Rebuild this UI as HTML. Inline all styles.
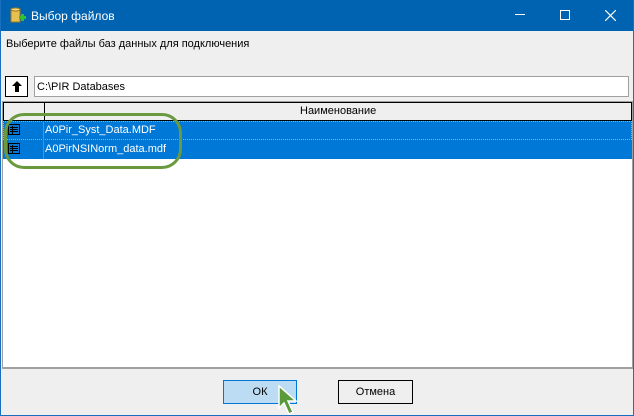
<!DOCTYPE html>
<html><head><meta charset="utf-8"><style>
*{margin:0;padding:0;box-sizing:border-box}
body{width:634px;height:416px;overflow:hidden;background:#1a6fbf;font-family:"Liberation Sans",sans-serif;font-size:12px;color:#000;position:relative}
.win{position:absolute;left:1px;top:0;width:632px;height:415px;background:#efefef}
.title{position:absolute;left:0;top:0;width:632px;height:31px;background:#0063b1;color:#fff;font-size:12px}
.abs{position:absolute}
</style></head><body>
<div class="win">
<div class="title">
 <svg class="abs" style="left:8px;top:7px" width="18" height="18"><rect x="2" y="2" width="9" height="13" fill="#e8c050" stroke="#a07820"/><ellipse cx="6.5" cy="2.5" rx="4.5" ry="1.5" fill="#f5dc80" stroke="#a07820"/><rect x="10" y="9" width="7" height="3" fill="#30c030"/><rect x="12" y="7" width="3" height="7" fill="#30c030"/></svg>
 <div class="abs" style="left:30px;top:9px">Выбор файлов</div>
 <div class="abs" style="left:514px;top:14px;width:10px;height:1px;background:#fff"></div>
 <div class="abs" style="left:559px;top:10px;width:10px;height:10px;border:1px solid #fff"></div>
 <svg class="abs" style="left:604px;top:10px" width="11" height="11"><path d="M0 0L11 11M11 0L0 11" stroke="#fff" stroke-width="1.2"/></svg>
</div>
<div class="abs" style="left:5px;top:38px;font-size:11px">Выберите файлы баз данных для подключения</div>
<div class="abs" style="left:4px;top:76px;width:23px;height:21px;border:1px solid #000;background:#fff"><svg class="abs" style="left:5px;top:4px" width="12" height="12"><path d="M6 0L11 5H8V11H4V5H1Z" fill="#000"/></svg></div>
<div class="abs" style="left:33px;top:76px;width:595px;height:21px;border:1px solid #a0a0a0;background:#fff;padding:4px 2px;font-size:11px">C:\PIR Databases</div>
<div class="abs" style="left:1px;top:101px;width:631px;height:268px;border:1px solid #a0a0a0;border-bottom:2px solid #a0a0a0;background:#fff">
 <div class="abs" style="left:0;top:0;width:629px;height:19px;border:1px solid #000;background:#efefef"><div class="abs" style="left:40px;top:0;width:1px;height:17px;background:#000"></div><div class="abs" style="left:296px;top:2px;font-size:11px">Наименование</div></div>
 <div class="abs" style="left:0;top:19px;width:629px;height:19px;background:#0078d7;border:1px dotted #e8a050"></div>
 <div class="abs" style="left:0;top:38px;width:629px;height:19px;background:#0078d7"></div>
 <div class="abs" style="left:40px;top:19px;width:1px;height:38px;background:#8080a0"></div>
 <svg class="abs" style="left:4px;top:21px" width="14" height="34"><g fill="none" stroke="#000"><rect x="1.5" y="1.5" width="11" height="10"/><path d="M3 4.5H11M3 6.5H11M3 8.5H11M5.5 3V11"/><rect x="1.5" y="20.5" width="11" height="10"/><path d="M3 23.5H11M3 25.5H11M3 27.5H11M5.5 22V30"/></g></svg>
 <div class="abs" style="left:42px;top:22px;color:#fff;font-size:11px">A0Pir_Syst_Data.MDF</div>
 <div class="abs" style="left:42px;top:41px;color:#fff;font-size:11px">A0PirNSINorm_data.mdf</div>
</div>
<div class="abs" style="left:3px;top:113px;width:178px;height:56px;border:3px solid #6a9a40;border-radius:20px"></div>
<div class="abs" style="left:222px;top:380px;width:74px;height:24px;border:1px solid #0078d7;background:#bcdcf4;text-align:center;line-height:22px;font-size:11px">ОК</div>
<div class="abs" style="left:337px;top:380px;width:75px;height:24px;border:1px solid #000;background:#efefef;text-align:center;line-height:22px;font-size:11px">Отмена</div>
<svg class="abs" style="left:276px;top:385px" width="26" height="31"><path d="M2 1L2 23L7 18L12 29L16 27L11 16L19 16Z" fill="#5a9a3a" stroke="#fff" stroke-width="1.5"/></svg>
</div>
</body></html>
